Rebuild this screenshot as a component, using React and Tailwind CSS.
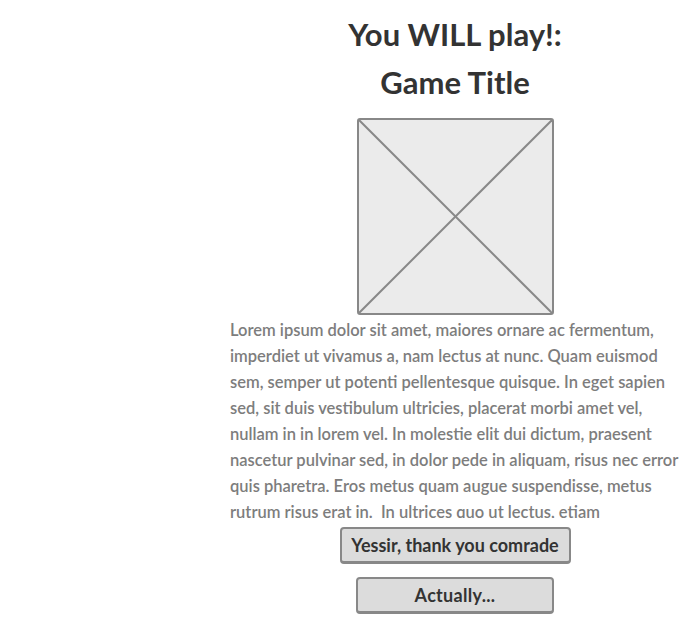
import React from "react";

const lines = [
  "Lorem ipsum dolor sit amet, maiores ornare ac fermentum,",
  "imperdiet ut vivamus a, nam lectus at nunc. Quam euismod",
  "sem, semper ut potenti pellentesque quisque. In eget sapien",
  "sed, sit duis vestibulum ultricies, placerat morbi amet vel,",
  "nullam in in lorem vel. In molestie elit dui dictum, praesent",
  "nascetur pulvinar sed, in dolor pede in aliquam, risus nec error",
  "quis pharetra. Eros metus quam augue suspendisse, metus",
  "rutrum risus erat in.  In ultrices quo ut lectus, etiam",
];

export default function App() {
  return (
    <div className="w-[700px] h-[636px] bg-white overflow-hidden font-['Lato',sans-serif]">
      <div className="ml-[230px] w-[450px] flex flex-col items-center">
        <h1 className="mt-[10px] text-[31px] leading-[48px] font-bold text-[#333] text-center">
          You WILL play!:
          <br />
          Game Title
        </h1>
        <div className="mt-[12px] w-[197px] h-[197px] rounded-[3px] border-2 border-[#888] bg-[#ebebeb]">
          <svg width="193" height="193" viewBox="0 0 193 193" className="block">
            <line x1="0" y1="0" x2="193" y2="193" stroke="#888" strokeWidth="2" />
            <line x1="193" y1="0" x2="0" y2="193" stroke="#888" strokeWidth="2" />
          </svg>
        </div>
        <div className="mt-[2px] self-stretch h-[201px] overflow-hidden text-[16.5px] leading-[26px] text-[#7d7d7d] font-semibold">
          {lines.map((l, i) => (
            <div key={i} className="whitespace-pre">{l}</div>
          ))}
        </div>
        <button className="mt-[9px] h-[37px] px-0 w-[231px] whitespace-nowrap rounded-[4px] border-2 border-[#888] border-b-[3px] bg-[#dcdcdc] text-[18px] leading-[24px] font-bold text-[#333]">
          Yessir, thank you comrade
        </button>
        <button className="mt-[13px] h-[37px] w-[198px] whitespace-nowrap rounded-[4px] border-2 border-[#888] border-b-[3px] bg-[#dcdcdc] text-[18px] leading-[24px] font-bold text-[#333] tracking-[0.3px]">
          Actually...
        </button>
      </div>
    </div>
  );
}
